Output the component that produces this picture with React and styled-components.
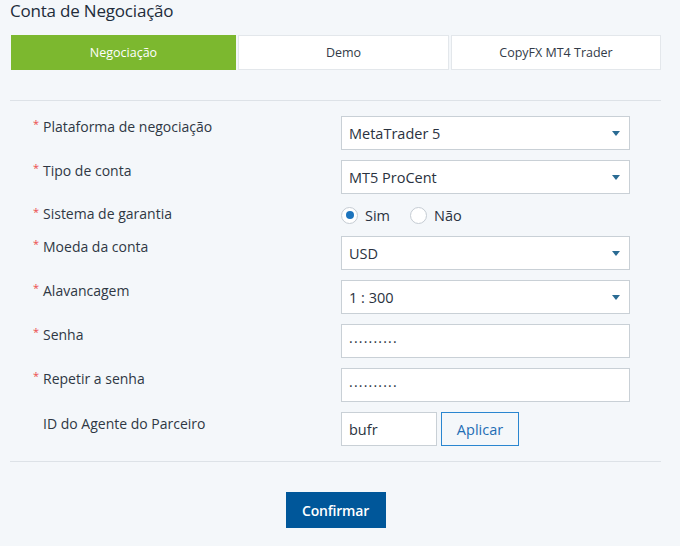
import React from "react";
import styled, { createGlobalStyle } from "styled-components";

const Global = createGlobalStyle`
  html, body { margin: 0; padding: 0; background: #f4f7fa; }
  body { font-family: "Open Sans", "Noto Sans", Arial, sans-serif; color: #2f3642; }
`;

const Page = styled.div`
  width: 651px;
  padding: 0 0 0 10px;
`;

const Title = styled.h1`
  margin: 0;
  height: 35px;
  font-size: 17px;
  font-weight: 400;
  line-height: 22px;
  color: #222c3a;
  letter-spacing: -0.2px;
`;

const Tabs = styled.div`
  display: grid;
  grid-template-columns: 225px 211px 210px;
  gap: 2px;
  margin-left: 1px;
`;

const Tab = styled.div`
  height: 35px;
  box-sizing: border-box;
  display: flex;
  align-items: center;
  justify-content: center;
  font-size: 12.5px;
  background: ${(p) => (p.$active ? "#7cb82f" : "#ffffff")};
  color: ${(p) => (p.$active ? "#ffffff" : "#333b48")};
  border: 1px solid ${(p) => (p.$active ? "#7cb82f" : "#e3e7eb")};
`;

const Divider = styled.hr`
  margin: ${(p) => p.$m || "0"};
  border: 0;
  border-top: 1px solid #dde2e7;
  height: 0;
`;

const Form = styled.div`
  display: grid;
  grid-template-columns: 308px 289px;
  row-gap: 10px;
  padding: 15px 0 0 23px;
`;

const Label = styled.div`
  position: relative;
  padding-left: 10px;
  padding-top: ${(p) => p.$pt || "1px"};
  font-size: 14px;
  line-height: 20px;
  color: #2f3744;
`;

const Star = styled.span`
  position: absolute;
  left: 0;
  top: -2px;
  color: #ec4c4c;
  font-size: 11px;
`;

const Select = styled.div`
  height: 34px;
  box-sizing: border-box;
  background: #fff;
  border: 1px solid #c9d0d6;
  display: flex;
  align-items: center;
  justify-content: space-between;
  padding: 0 9px 0 7px;
  font-size: 14.5px;
  color: #2a3240;
`;

const Caret = styled.span`
  width: 0;
  height: 0;
  border-left: 4px solid transparent;
  border-right: 4px solid transparent;
  border-top: 5px solid #2a6b93;
`;

const Input = styled.div`
  height: 34px;
  box-sizing: border-box;
  width: ${(p) => p.$w || "100%"};
  background: #fff;
  border: 1px solid #c9d0d6;
  display: flex;
  align-items: center;
  padding: 0 7px;
  font-size: 14.5px;
  color: #2a3240;
`;

const Dots = styled.span`
  letter-spacing: 1.2px;
  font-size: 14px;
  position: relative;
  top: -4px;
`;

const RadioRow = styled.div`
  height: 22px;
  display: flex;
  align-items: center;
  font-size: 14.5px;
`;

const RadioItem = styled.label`
  display: flex;
  align-items: center;
  gap: 7px;
  margin-right: 20px;
  color: #2a3240;
`;

const RadioCircle = styled.span`
  width: 17px;
  height: 17px;
  box-sizing: border-box;
  border-radius: 50%;
  border: 1.5px solid #c5ccd3;
  background: #fff;
  display: flex;
  align-items: center;
  justify-content: center;
  &::after {
    content: "";
    width: 8px;
    height: 8px;
    border-radius: 50%;
    background: ${(p) => (p.$on ? "#1d74bd" : "transparent")};
  }
`;

const InlineRow = styled.div`
  display: flex;
  gap: 4px;
`;

const OutlineButton = styled.button`
  height: 34px;
  width: 78px;
  box-sizing: border-box;
  border: 1px solid #2a86d0;
  background: #f4f7fa;
  color: #1f6db4;
  font-family: inherit;
  font-size: 14.5px;
  padding: 0;
`;

const Footer = styled.div`
  display: flex;
  justify-content: center;
  padding-top: 30px;
`;

const PrimaryButton = styled.button`
  width: 100px;
  height: 36px;
  border: 0;
  background: #00579a;
  color: #fff;
  font-family: inherit;
  font-weight: 600;
  font-size: 14px;
  letter-spacing: -0.2px;
`;

function Field({ label, required = true, pt, children }) {
  return (
    <>
      <Label $pt={pt}>
        {required && <Star>*</Star>}
        {label}
      </Label>
      {children}
    </>
  );
}

export default function App() {
  return (
    <Page>
      <Global />
      <Title>Conta de Negociação</Title>
      <Tabs>
        <Tab $active>Negociação</Tab>
        <Tab>Demo</Tab>
        <Tab>CopyFX MT4 Trader</Tab>
      </Tabs>
      <Divider $m="30px 0 0 0" />
      <Form>
        <Field label="Plataforma de negociação">
          <Select>MetaTrader 5<Caret /></Select>
        </Field>
        <Field label="Tipo de conta">
          <Select>MT5 ProCent<Caret /></Select>
        </Field>
        <Field label="Sistema de garantia" pt="0px">
          <RadioRow>
            <RadioItem><RadioCircle $on />Sim</RadioItem>
            <RadioItem><RadioCircle />Não</RadioItem>
          </RadioRow>
        </Field>
        <Field label="Moeda da conta">
          <Select>USD<Caret /></Select>
        </Field>
        <Field label="Alavancagem">
          <Select>1 : 300<Caret /></Select>
        </Field>
        <Field label="Senha">
          <Input><Dots>..........</Dots></Input>
        </Field>
        <Field label="Repetir a senha">
          <Input><Dots>..........</Dots></Input>
        </Field>
        <Field label="ID do Agente do Parceiro" required={false} pt="2px">
          <InlineRow>
            <Input $w="96px">bufr</Input>
            <OutlineButton>Aplicar</OutlineButton>
          </InlineRow>
        </Field>
      </Form>
      <Divider $m="15px 0 0 0" />
      <Footer>
        <PrimaryButton>Confirmar</PrimaryButton>
      </Footer>
    </Page>
  );
}
